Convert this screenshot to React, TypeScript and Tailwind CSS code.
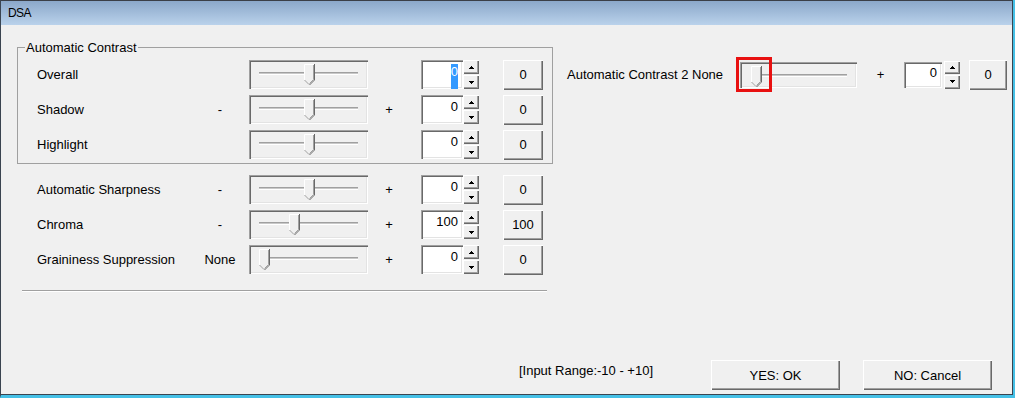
import React from "react";

const sunken =
  "shadow-[inset_1px_1px_0_#a0a0a0,inset_2px_2px_0_#696969,inset_-1px_-1px_0_#ffffff,inset_-2px_-2px_0_#e3e3e3]";
const raised =
  "shadow-[inset_1px_1px_0_#ffffff,inset_-1px_-1px_0_#696969,inset_-2px_-2px_0_#a0a0a0]";

function Thumb() {
  return (
    <svg width="11" height="21" viewBox="0 0 11 21" className="block shrink-0">
      <path d="M0 0H11V16L5.5 21L0 16Z" fill="#f0f0f0" />
      <path d="M0.5 16V0.5H10" stroke="#ffffff" fill="none" />
      <path d="M10.5 0V16L5.5 21" stroke="#696969" fill="none" />
      <path d="M9.5 1V15.5L5.5 19.5" stroke="#a0a0a0" fill="none" />
      <path d="M0.5 16L5 20.5" stroke="#a0a0a0" fill="none" />
    </svg>
  );
}

function Track({ width }: { width?: number }) {
  return (
    <div
      className={`mt-[8px] h-[3px] border-t border-t-[#a0a0a0] border-b border-b-white bg-[#c8c8c8] ${
        width === undefined ? "flex-1" : "shrink-0"
      }`}
      style={width === undefined ? undefined : { width }}
    />
  );
}

function Slider({ left, small }: { left: number; small?: boolean }) {
  return (
    <div
      className={`flex items-start pt-[4px] ${
        small ? "w-[117px] h-[26px] pl-[11px] pr-[10px]" : "w-[119px] h-[29px] px-[10px]"
      } ${sunken}`}
    >
      {left > 0 && <Track width={left} />}
      <Thumb />
      <Track />
    </div>
  );
}

function Arrow({ down }: { down?: boolean }) {
  return (
    <svg width="5" height="3" viewBox="0 0 5 3" shapeRendering="crispEdges" className="block">
      {down ? (
        <>
          <rect x="0" y="0" width="5" height="1" fill="#000" />
          <rect x="1" y="1" width="3" height="1" fill="#000" />
          <rect x="2" y="2" width="1" height="1" fill="#000" />
        </>
      ) : (
        <>
          <rect x="2" y="0" width="1" height="1" fill="#000" />
          <rect x="1" y="1" width="3" height="1" fill="#000" />
          <rect x="0" y="2" width="5" height="1" fill="#000" />
        </>
      )}
    </svg>
  );
}

function Spin({ small }: { small?: boolean }) {
  return (
    <div className={`flex flex-col gap-[1px] w-[16px] ${small ? "h-[28px]" : "h-[29px]"}`}>
      <div className={`flex-1 flex items-center justify-center bg-[#f0f0f0] ${raised}`}>
        <Arrow />
      </div>
      <div className={`flex-1 flex items-center justify-center bg-[#f0f0f0] ${raised}`}>
        <Arrow down />
      </div>
    </div>
  );
}

function Edit({ value, selected, small }: { value: string; selected?: boolean; small?: boolean }) {
  return (
    <div
      className={`flex justify-end bg-white leading-[15px] ${
        small ? "w-[38px] h-[26px] pt-[3px] pr-[5px]" : "w-[42px] h-[29px] pt-[4px] pr-[5px]"
      } ${sunken}`}
    >
      <span className={selected ? "bg-[#3399ff] text-white" : ""}>{value}</span>
    </div>
  );
}

function Btn({ children, className }: { children: React.ReactNode; className: string }) {
  return (
    <div className={`flex items-center justify-center bg-[#f0f0f0] ${raised} ${className}`}>
      {children}
    </div>
  );
}

type RowProps = {
  label: string;
  sign?: string;
  plus?: boolean;
  thumb: number;
  value: string;
  selected?: boolean;
};

function Row({ label, sign, plus, thumb, value, selected }: RowProps) {
  return (
    <div className="flex h-[35px] items-center">
      <div className="w-[163px]">{label}</div>
      <div className="w-[40px] text-center">{sign}</div>
      <div className="ml-[9px]">
        <Slider left={thumb} />
      </div>
      <div className="w-[42px] text-center">{plus ? "+" : ""}</div>
      <div className="ml-[11px] flex">
        <Edit value={value} selected={selected} />
        <Spin />
      </div>
      <Btn className="ml-[24px] w-[40px] h-[30px]">{value}</Btn>
    </div>
  );
}

export default function App() {
  return (
    <div className="w-[1015px] h-[398px] flex flex-col border-l border-l-[#3a4450] border-r-2 border-r-[#45c0e6] border-b-[3px] border-b-[#45c0e6] font-['Liberation_Sans',Arial,sans-serif] text-[13px] leading-[15px] text-black">
      <div className="flex flex-col flex-1 border-r border-r-[#3a4450] border-b border-b-[#3a4450] bg-[#f0f0f0]">
        <div className="h-[25px] shrink-0 flex items-center pl-[7px] border-t border-t-[#3a3f47] bg-linear-to-b from-[#8ba8ca] to-[#bad2eb] text-[12px] tracking-[-0.6px]">
          DSA
        </div>
        <div className="flex-1 flex flex-col">
          <div className="flex items-start">
            <div className="ml-[16px] mt-[15px] w-[536px] flex flex-col">
              <fieldset className="border border-[#a0a0a0] m-0 p-0">
                <legend className="ml-[7px] px-[1px] leading-[15px]">Automatic Contrast</legend>
                <div className="pl-[19px] pt-[2px] pb-[1px]">
                  <Row label="Overall" thumb={45} value="0" selected />
                  <Row label="Shadow" sign="-" plus thumb={45} value="0" />
                  <Row label="Highlight" thumb={45} value="0" />
                </div>
              </fieldset>
              <div className="mt-[8px] pl-[20px]">
                <Row label="Automatic Sharpness" sign="-" plus thumb={45} value="0" />
                <Row label="Chroma" sign="-" plus thumb={30} value="100" />
                <Row label="Graininess Suppression" sign="None" plus thumb={0} value="0" />
              </div>
              <div className="mt-[13px] ml-[5px] w-[525px] h-[2px] border-t border-t-[#a0a0a0] border-b border-b-white" />
            </div>
            <div className="ml-[14px] mt-[32px] flex h-[35px] items-center">
              <div className="w-[173px]">Automatic Contrast 2 None</div>
              <div className="relative">
                <Slider left={0} small />
                <div className="absolute left-[-4px] top-[-5px] w-[36px] h-[35px] border-[3px] border-[#e81010]" />
              </div>
              <div className="w-[47px] text-center">+</div>
              <Edit value="0" small />
              <div className="ml-[2px]">
                <Spin small />
              </div>
              <Btn className="ml-[9px] w-[38px] h-[30px]">0</Btn>
            </div>
          </div>
          <div className="mt-auto flex items-center justify-end pr-[20px] pb-[4px]">
            <div className="mb-[10px] mr-[58px]">[Input Range:-10 - +10]</div>
            <Btn className="w-[129px] h-[30px]">YES: OK</Btn>
            <Btn className="ml-[23px] w-[129px] h-[30px]">NO: Cancel</Btn>
          </div>
        </div>
      </div>
    </div>
  );
}
